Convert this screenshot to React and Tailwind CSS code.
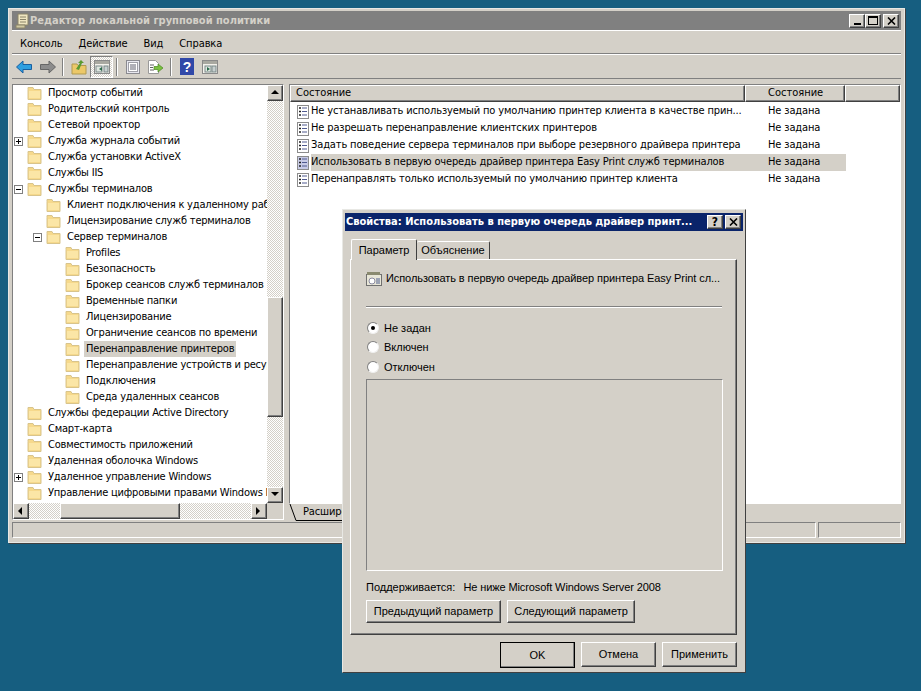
const tahoma = "font-['DejaVu_Sans_Condensed','DejaVu_Sans',sans-serif]";
const arial = "font-['Liberation_Sans',Arial,sans-serif]";
const raised =
  "border border-t-white border-l-white border-r-[#404040] border-b-[#404040] shadow-[inset_-1px_-1px_0_#808080] bg-[#d4d0c8]";
const sunken =
  "border border-t-[#808080] border-l-[#808080] border-r-white border-b-white";
const dither =
  "bg-[repeating-conic-gradient(#ffffff_0_25%,#d4d0c8_0_50%)] bg-[length:2px_2px]";

const treeRows = [
  { level: 0, label: "Просмотр событий" },
  { level: 0, label: "Родительский контроль" },
  { level: 0, label: "Сетевой проектор" },
  { level: 0, label: "Служба журнала событий", toggle: "+" },
  { level: 0, label: "Служба установки ActiveX" },
  { level: 0, label: "Службы IIS" },
  { level: 0, label: "Службы терминалов", toggle: "-" },
  { level: 1, label: "Клиент подключения к удаленному рабочему столу" },
  { level: 1, label: "Лицензирование служб терминалов" },
  { level: 1, label: "Сервер терминалов", toggle: "-" },
  { level: 2, label: "Profiles" },
  { level: 2, label: "Безопасность" },
  { level: 2, label: "Брокер сеансов служб терминалов" },
  { level: 2, label: "Временные папки" },
  { level: 2, label: "Лицензирование" },
  { level: 2, label: "Ограничение сеансов по времени" },
  { level: 2, label: "Перенаправление принтеров", selected: true },
  { level: 2, label: "Перенаправление устройств и ресурсов" },
  { level: 2, label: "Подключения" },
  { level: 2, label: "Среда удаленных сеансов" },
  { level: 0, label: "Службы федерации Active Directory" },
  { level: 0, label: "Смарт-карта" },
  { level: 0, label: "Совместимость приложений" },
  { level: 0, label: "Удаленная оболочка Windows" },
  { level: 0, label: "Удаленное управление Windows", toggle: "+" },
  { level: 0, label: "Управление цифровыми правами Windows Media" },
  { level: 0, label: "" },
];

const policies = [
  { label: "Не устанавливать используемый по умолчанию принтер клиента в качестве прин..." },
  { label: "Не разрешать перенаправление клиентских принтеров" },
  { label: "Задать поведение сервера терминалов при выборе резервного драйвера принтера" },
  { label: "Использовать в первую очередь драйвер принтера Easy Print служб терминалов", selected: true },
  { label: "Перенаправлять только используемый по умолчанию принтер клиента" },
];

const FolderIcon = () => (
  <svg width="15" height="14" viewBox="0 0 15 14" className="shrink-0">
    <path d="M1 3.500V1.500h5l1 2h7v10H1z" fill="#f6d98c" stroke="#d8c48c" />
    <rect x="2" y="5" width="11" height="7" fill="#fbe6a6" />
  </svg>
);

const PolicyIcon = ({ selected }) => (
  <svg width="12" height="14" viewBox="0 0 12 14" className="shrink-0">
    <rect x="0.500" y="0.500" width="11" height="13" fill={selected ? "#c8cbe6" : "#ffffff"} stroke="#8c8c8c" />
    <path d="M2 3h2M2 6.500h2M2 10h2" stroke="#202020" strokeWidth="1.500" />
    <path d="M5 3h5M5 6.500h5M5 10h5" stroke="#505a90" />
  </svg>
);

const Arrow = ({ dir }) => {
  const points = {
    up: "4,1 0,5 8,5",
    down: "0,1 8,1 4,5",
    left: "5,0 5,8 1,4",
    right: "1,0 1,8 5,4",
  };
  return (
    <svg width="8" height="8" viewBox="0 0 8 8">
      <polygon points={points[dir]} fill="#000000" />
    </svg>
  );
};

const ScrollButton = ({ dir }) => (
  <div className={`${raised} w-4 h-4 shrink-0 flex items-center justify-center`}>
    <Arrow dir={dir} />
  </div>
);

const TreeRow = ({ row }) => {
  const pad = { 0: "pl-[14px]", 1: "pl-[33px]", 2: "pl-[52px]" }[row.level];
  const togglePos = { 0: "left-px", 1: "left-5", 2: "left-[38px]" }[row.level];
  return (
    <div className={`relative flex items-center h-4 ${pad} whitespace-nowrap`}>
      {row.toggle && (
        <span className={`absolute ${togglePos} top-1 w-[9px] h-[9px] border border-[#808080] bg-white flex items-center justify-center`}>
          <span className="absolute w-[5px] h-px bg-black" />
          {row.toggle === "+" && <span className="absolute w-px h-[5px] bg-black" />}
        </span>
      )}
      <FolderIcon />
      <span className={`ml-1 px-0.5 leading-4 tracking-[-0.2px] ${row.selected ? "bg-[#d4d0c8]" : ""}`}>{row.label}</span>
    </div>
  );
};

const ToolbarIcon = ({ children, active, className = "" }) => (
  <div className={`w-[23px] h-[22px] shrink-0 flex items-center justify-center ${active ? `${sunken} ${dither}` : ""} ${className}`}>
    {children}
  </div>
);

const Divider = () => <div className="w-0.5 h-[18px] mx-[3px] shrink-0 border-l border-l-[#808080] border-r border-r-white" />;

const PanelIcon = ({ play }) => (
  <svg width="16" height="16" viewBox="0 0 16 16">
    <rect x="0.500" y="1.500" width="15" height="13" fill="#f4f2ec" stroke="#8a8a8a" />
    <rect x="1" y="2" width="14" height="3" fill="#a8a8a0" />
    <rect x={play ? "3" : "2"} y="7" width="6" height="6" fill="#dfe6e0" stroke="#7a8a8a" />
    <rect x="10" y="7" width="4" height="6" fill="#c8d0d0" stroke="#7a8a8a" />
    <polygon points={play ? "5,8 5,12 8,10" : "8,8 8,12 5,10"} fill="#2a6a4a" />
  </svg>
);

const Toolbar = () => (
  <div className="h-[25px] shrink-0 flex items-center pl-px border-t border-t-white border-b border-b-[#808080]">
    <ToolbarIcon className="pr-0.5">
      <svg width="16" height="14" viewBox="0 0 16 14">
        <path d="M0.500 7 7 1v3.500h8.500v5H7V13z" fill="#2f9fe0" stroke="#1a5fa0" />
      </svg>
    </ToolbarIcon>
    <ToolbarIcon>
      <svg width="16" height="14" viewBox="0 0 16 14">
        <path d="M15.500 7 9 1v3.500H0.500v5H9V13z" fill="#8c8c8c" stroke="#666666" />
      </svg>
    </ToolbarIcon>
    <Divider />
    <ToolbarIcon>
      <svg width="16" height="16" viewBox="0 0 16 16">
        <path d="M1 5h5l1 1.500h8V15H1z" fill="#ecc868" stroke="#b09a50" />
        <path d="M5 10 9 4H7l3-3 3 3h-2L8 11z" fill="#5a9a30" />
      </svg>
    </ToolbarIcon>
    <ToolbarIcon active>
      <PanelIcon />
    </ToolbarIcon>
    <Divider />
    <ToolbarIcon>
      <svg width="16" height="16" viewBox="0 0 16 16">
        <rect x="1.500" y="1.500" width="13" height="13" fill="#e8e8f0" stroke="#8a8a90" />
        <rect x="3.500" y="3.500" width="9" height="9" fill="#ffffff" stroke="#a0a0a8" />
        <path d="M5 6h6M5 8h6M5 10h6" stroke="#606070" />
      </svg>
    </ToolbarIcon>
    <ToolbarIcon>
      <svg width="17" height="16" viewBox="0 0 17 16">
        <path d="M1.500 1.500h7l3 3v10h-10z" fill="#ffffff" stroke="#9a9a9a" />
        <path d="M3 6h4M3 8.500h3M3 11h4" stroke="#606060" />
        <path d="M7 7.500h4V5l5 4-5 4v-2.500H7z" fill="#7ac040" stroke="#4a8a20" strokeWidth="0.700" />
      </svg>
    </ToolbarIcon>
    <Divider />
    <ToolbarIcon>
      <svg width="14" height="17" viewBox="0 0 14 17">
        <rect width="14" height="17" fill="#3048a8" />
        <text x="7" y="14" textAnchor="middle" fontSize="14" fontWeight="700" fontFamily="Liberation Sans" fill="#ffffff">?</text>
      </svg>
    </ToolbarIcon>
    <ToolbarIcon>
      <PanelIcon play />
    </ToolbarIcon>
  </div>
);

const TitleButton = ({ children, className = "" }) => (
  <div className={`${raised} w-4 h-[14px] flex items-center justify-center ${className}`}>{children}</div>
);

const CloseGlyph = () => (
  <svg width="9" height="8" viewBox="0 0 9 8">
    <path d="M1 0.500 8 7.500M8 0.500 1 7.500" stroke="#000000" strokeWidth="1.600" />
  </svg>
);

const HeaderCell = ({ className, children }) => (
  <div className={`${raised} h-[17px] flex items-center ${className}`}>{children}</div>
);

const MainWindow = () => (
  <div className={`${tahoma} absolute left-2 top-2 w-[897px] h-[535px] px-[3px] pt-[2px] pb-[3px] bg-[#d4d0c8] border border-[#e8e8e4] shadow-[1px_1px_0_#404040] flex flex-col text-[11px] text-black`}>
    <div className="h-[19px] bg-[#808080] flex items-center pl-[3px] pr-0.5 shrink-0">
      <svg width="14" height="16" viewBox="0 0 14 16" className="shrink-0">
        <path d="M3 1h10v11H3z" fill="#efe6c0" stroke="#8a8468" />
        <path d="M1 12h9v3H1z" fill="#cfc8a0" stroke="#8a8468" />
        <path d="M5 4h6M5 6.500h6M5 9h6" stroke="#8a8468" />
      </svg>
      <span className="ml-px pt-px font-bold text-[#d4d0c8] text-[11px]">Редактор локальной групповой политики</span>
      <div className="ml-auto flex">
        <TitleButton>
          <span className="w-[7px] h-0.5 bg-black mt-[7px]" />
        </TitleButton>
        <TitleButton>
          <span className="w-[10px] h-[9px] border border-black border-t-2" />
        </TitleButton>
        <TitleButton className="ml-0.5">
          <CloseGlyph />
        </TitleButton>
      </div>
    </div>
    <div className="h-[24px] shrink-0 flex items-center gap-4 pl-2 pt-[5px] border-t border-t-white border-b border-b-[#808080] tracking-[-0.1px]">
      <span>Консоль</span>
      <span>Действие</span>
      <span>Вид</span>
      <span>Справка</span>
    </div>
    <Toolbar />
    <div className="flex-1 min-h-0 flex gap-[5px] mt-[5px]">
      <div className={`w-[272px] h-[436px] shrink-0 ${sunken} bg-white flex flex-col`}>
        <div className="flex-1 min-h-0 flex">
          <div className="flex-1 min-w-0 overflow-hidden">
            {treeRows.map((row, i) => (
              <TreeRow key={i} row={row} />
            ))}
          </div>
          <div className={`w-4 flex flex-col ${dither}`}>
            <ScrollButton dir="up" />
            <div className="h-[196px]" />
            <div className={`${raised} h-[120px]`} />
            <div className="flex-1" />
            <ScrollButton dir="down" />
          </div>
        </div>
        <div className={`h-4 flex shrink-0 ${dither}`}>
          <ScrollButton dir="left" />
          <div className="w-[31px]" />
          <div className={`${raised} w-[120px]`} />
          <div className="flex-1" />
          <ScrollButton dir="right" />
          <div className="w-4 bg-[#d4d0c8]" />
        </div>
      </div>
      <div className="flex-1 min-w-0 flex flex-col">
        <div className={`h-[420px] shrink-0 ${sunken} border-t-[#404040] border-b-black bg-white`}>
          <div className="flex">
            <HeaderCell className="w-[455px] pl-[5px]">Состояние</HeaderCell>
            <HeaderCell className="w-[100px] pl-[22px]">Состояние</HeaderCell>
            <HeaderCell className="flex-1" />
          </div>
          <div className="pt-px">
            {policies.map((p) => (
              <div key={p.label} className="h-[17px] flex items-center pl-[7px] whitespace-nowrap tracking-[-0.14px]">
                <PolicyIcon selected={p.selected} />
                <div className={`ml-[2px] w-[535px] h-[17px] flex items-center ${p.selected ? "bg-[#d4d0c8]" : ""}`}>
                  <span className="w-[457px] overflow-hidden">{p.label}</span>
                  <span>Не задана</span>
                </div>
              </div>
            ))}
          </div>
        </div>
        <div className="flex h-[17px] tracking-[-0.14px]">
          <svg width="8" height="17" viewBox="0 0 8 17" className="shrink-0">
            <path d="M1 0 7 16.500" stroke="#000000" />
            <path d="M7 16.500h1" stroke="#000000" />
          </svg>
          <div className="w-[60px] border-b border-b-black pl-1.5 leading-[16px] whitespace-nowrap overflow-hidden">
            Расширенный
          </div>
        </div>
      </div>
    </div>
    <div className="h-[16px] shrink-0 mb-px flex gap-0.5">
      <div className={`${sunken} flex-1`} />
      <div className={`${sunken} w-[83px]`} />
    </div>
  </div>
);

const Radio = ({ checked, label }) => (
  <div className="flex items-center h-[19.500px]">
    <span className="w-3 h-3 rounded-full bg-white border border-[#808080] border-r-[#f0f0f0] border-b-[#f0f0f0] flex items-center justify-center">
      {checked && <span className="w-1 h-1 rounded-full bg-black" />}
    </span>
    <span className="ml-[5px]">{label}</span>
  </div>
);

const DialogButton = ({ className = "", children }) => (
  <div className={`${raised} flex items-center justify-center ${className}`}>{children}</div>
);

const PropertiesDialog = () => (
  <div className={`${arial} absolute left-[342px] top-[209px] w-[404px] h-[464px] px-[2px] py-[3px] bg-[#d4d0c8] border border-t-[#e8e8e4] border-l-[#e8e8e4] border-r-[#404040] border-b-[#404040] flex flex-col text-[11px] text-black`}>
    <div className={`${tahoma} h-[18px] bg-[#0a246a] flex items-center pr-0.5 shrink-0`}>
      <span className="pl-px font-bold text-white text-[11px] whitespace-nowrap">Свойства: Использовать в первую очередь драйвер принт...</span>
      <div className="ml-auto flex gap-0.5">
        <TitleButton>
          <span className="font-bold text-[12px] leading-none">?</span>
        </TitleButton>
        <TitleButton>
          <CloseGlyph />
        </TitleButton>
      </div>
    </div>
    <div className="flex items-end pl-1.5 h-[28px] relative z-10 shrink-0">
      <div className="w-[66px] h-[21px] bg-[#d4d0c8] border-t border-t-white border-l border-l-white border-r border-r-[#404040] rounded-t-[2px] flex items-center justify-center -mb-px">
        Параметр
      </div>
      <div className="w-[73px] h-[18px] border-t border-t-white border-r border-r-[#404040] rounded-t-[2px] flex items-center justify-center">
        Объяснение
      </div>
    </div>
    <div className={`${raised} ml-[5px] w-[387px] h-[376px] pl-[15px] flex flex-col shrink-0`}>
      <div className="h-[46px] pt-[10px] flex items-start">
        <svg width="16" height="16" viewBox="0 0 16 16" className="shrink-0 mt-px">
          <rect x="0.500" y="3.500" width="15" height="11" fill="#e8e6d8" stroke="#707070" />
          <rect x="1" y="1" width="13" height="3" fill="#8a8a70" />
          <circle cx="6" cy="10" r="3" fill="#ffffff" stroke="#8a8aa0" />
          <path d="M10 8h4M10 10h4M10 12h4" stroke="#506090" />
        </svg>
        <span className="ml-1 whitespace-nowrap tracking-[-0.08px]">Использовать в первую очередь драйвер принтера Easy Print сл...</span>
      </div>
      <div className="w-[356px] border-t border-t-[#808080] border-b border-b-white" />
      <div className="mt-[10px] pl-px">
        <Radio checked label="Не задан" />
        <Radio label="Включен" />
        <Radio label="Отключен" />
      </div>
      <div className={`${sunken} mt-0.5 w-[357px] h-[192px] border-t-[#404040] border-l-[#404040]`} />
      <div className="mt-2 flex gap-2 whitespace-nowrap">
        <span>Поддерживается:</span>
        <span className="tracking-[-0.1px]">Не ниже Microsoft Windows Server 2008</span>
      </div>
      <div className="mt-[5px] flex gap-[6px]">
        <DialogButton className="w-[135px] h-[23px]">Предыдущий параметр</DialogButton>
        <DialogButton className="w-[128px] h-[23px]">Следующий параметр</DialogButton>
      </div>
    </div>
    <div className="mt-[7px] mr-1.5 flex justify-end gap-[6px]">
      <DialogButton className="w-[75px] h-[26px] outline outline-black -outline-offset-1">OK</DialogButton>
      <DialogButton className="w-[75px] h-[25px]">Отмена</DialogButton>
      <DialogButton className="w-[75px] h-[25px]">Применить</DialogButton>
    </div>
  </div>
);

export default function App() {
  return (
    <div className="relative w-[921px] h-[691px] overflow-hidden bg-[#165e80]">
      <MainWindow />
      <PropertiesDialog />
    </div>
  );
}
